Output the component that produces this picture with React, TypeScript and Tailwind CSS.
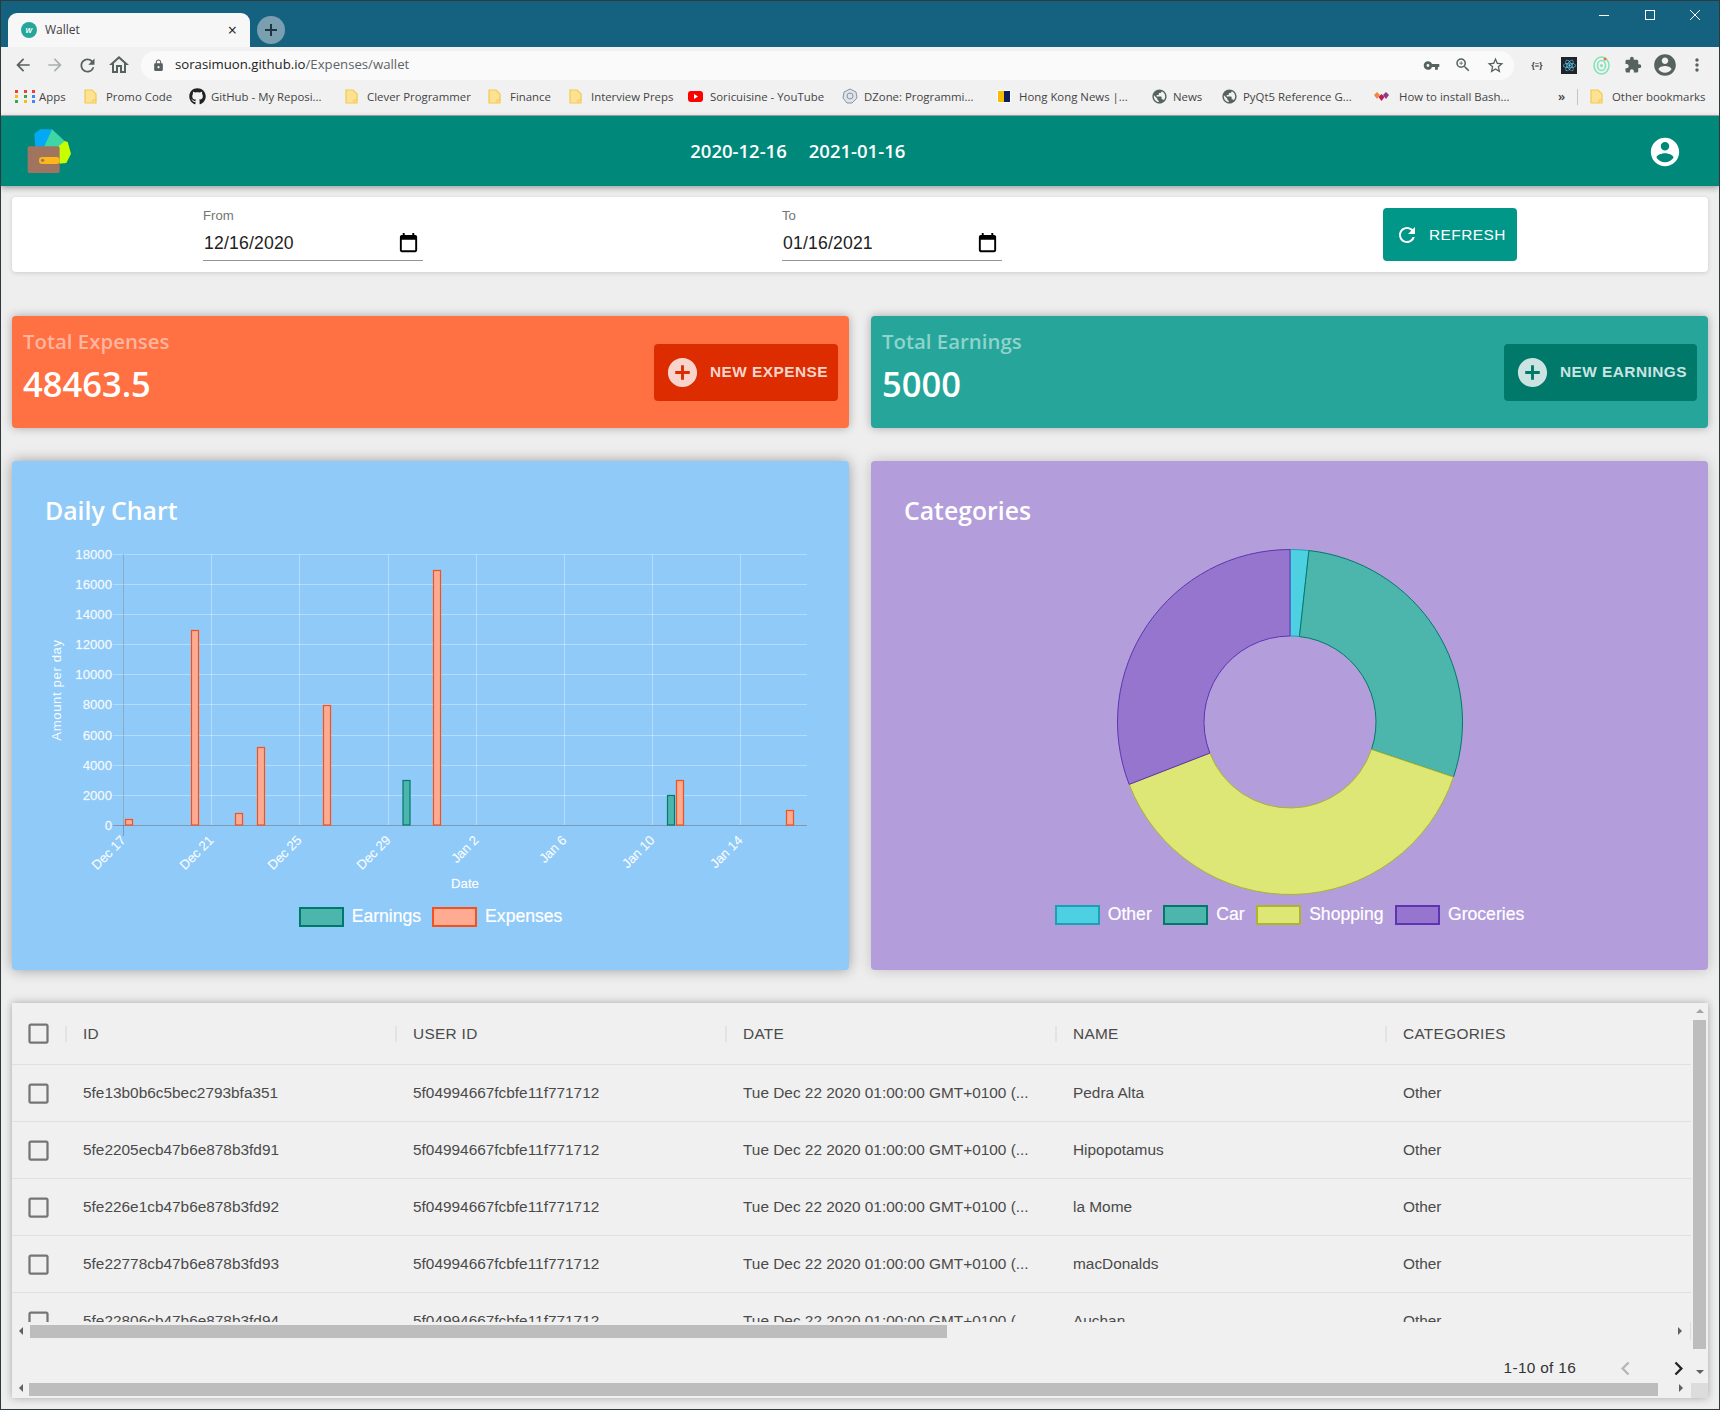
import { FaGithub, FaReact } from "react-icons/fa";
import {
  MdArrowBack,
  MdArrowForward,
  MdCheckBoxOutlineBlank,
  MdChevronLeft,
  MdChevronRight,
  MdExtension,
  MdLock,
  MdMoreVert,
  MdOutlineHome,
  MdPublic,
  MdRefresh,
  MdStarBorder,
  MdVpnKey,
  MdZoomIn,
} from "react-icons/md";

const USER_PATH =
  "M12 2C6.48 2 2 6.48 2 12s4.48 10 10 10 10-4.48 10-10S17.52 2 12 2zm0 3c1.66 0 3 1.34 3 3s-1.34 3-3 3-3-1.34-3-3 1.34-3 3-3zm0 14.2c-2.5 0-4.71-1.28-6-3.22.03-1.99 4-3.08 6-3.08 1.99 0 5.97 1.09 6 3.08-1.29 1.94-3.5 3.22-6 3.22z";

const rows = [
  ["5fe13b0b6c5bec2793bfa351", "Pedra Alta"],
  ["5fe2205ecb47b6e878b3fd91", "Hipopotamus"],
  ["5fe226e1cb47b6e878b3fd92", "la Mome"],
  ["5fe22778cb47b6e878b3fd93", "macDonalds"],
  ["5fe22806cb47b6e878b3fd94", "Auchan"],
];

const yTicks = [18000, 16000, 14000, 12000, 10000, 8000, 6000, 4000, 2000, 0];
const yPos = [554, 584, 614, 644, 674, 704, 735, 765, 795, 825];
const xTicks = [
  ["Dec 17", 123],
  ["Dec 21", 211],
  ["Dec 25", 299],
  ["Dec 29", 388],
  ["Jan 2", 476],
  ["Jan 6", 564],
  ["Jan 10", 652],
  ["Jan 14", 740],
] as const;

// x, top, earnings?
const bars: [number, number, boolean][] = [
  [125.5, 819.5, false],
  [191.5, 630.5, false],
  [235.5, 813.5, false],
  [257.5, 747.5, false],
  [323.5, 705.5, false],
  [403, 780.5, true],
  [433.5, 570.5, false],
  [667.5, 795.5, true],
  [676.5, 780.5, false],
  [786.5, 810.5, false],
];

function slice(a0: number, a1: number) {
  const cx = 1290;
  const cy = 722;
  const R = 172.5;
  const r = 86;
  const p = (rad: number, deg: number) => {
    const t = (deg * Math.PI) / 180;
    return `${(cx + rad * Math.sin(t)).toFixed(2)} ${(cy - rad * Math.cos(t)).toFixed(2)}`;
  };
  const large = a1 - a0 > 180 ? 1 : 0;
  return `M${p(R, a0)} A${R} ${R} 0 ${large} 1 ${p(R, a1)} L${p(r, a1)} A${r} ${r} 0 ${large} 0 ${p(r, a0)} Z`;
}

function Folder() {
  return (
    <svg width="13" height="15" viewBox="0 0 13 15" className="shrink-0">
      <path d="M1 1h7l4 4v9H1z" fill="#fde293" stroke="#f4c94e" strokeWidth="1.2" />
      <path d="M9 14v-3h3" fill="none" stroke="#f4c94e" strokeWidth="1" />
    </svg>
  );
}

function Globe() {
  return <MdPublic size={17} className="shrink-0 text-[#55625f]" />;
}

function AppsIcon() {
  const colors = ["#ea4335", "#ea4335", "#ea4335", "#fbbc04", "#34a853", "#4285f4", "#34a853", "#fbbc04", "#4285f4"];
  return (
    <div className="grid grid-cols-3 gap-[2px] shrink-0">
      {colors.map((c, i) => (
        <div key={i} className="w-[3px] h-[3px]" style={{ background: c }} />
      ))}
    </div>
  );
}

function Bookmark({ width, icon, label }: { width: string; icon: React.ReactNode; label: string }) {
  return (
    <div className={`flex items-center shrink-0 ${width}`}>
      <div className="w-[22px] shrink-0 flex items-center">{icon}</div>
      <span className="whitespace-nowrap">{label}</span>
    </div>
  );
}

function Triangle({ dir }: { dir: "up" | "down" | "left" | "right" }) {
  const pts = {
    up: "1,6 5,2 9,6",
    down: "1,2 9,2 5,6",
    left: "6,1 6,9 2,5",
    right: "2,1 2,9 6,5",
  }[dir];
  return (
    <svg width="10" height="10" viewBox="0 0 10 10" className="shrink-0">
      <polygon points={pts} fill={dir === "up" ? "#a3a3a3" : "#606060"} />
    </svg>
  );
}

function AddIcon({ color }: { color: string }) {
  return (
    <svg width="35" height="35" viewBox="0 0 24 24" fill={color} className="shrink-0 -ml-[3px]">
      <path d="M12 2C6.48 2 2 6.48 2 12s4.48 10 10 10 10-4.48 10-10S17.52 2 12 2zm5 11h-4v4h-2v-4H7v-2h4V7h2v4h4v2z" />
    </svg>
  );
}

function DateField({ label, value }: { label: string; value: string }) {
  return (
    <div className="w-[220px] h-[53px] border-b border-[#949494] flex flex-col font-['Liberation_Sans',sans-serif]">
      <span className="text-[13.2px] leading-[16px] text-[#757575]">{label}</span>
      <div className="flex items-center justify-between mt-[7px] pr-[3px] pl-[1px]">
        <span className="text-[17.6px] leading-[24px] tracking-[0.01em] text-[#222]">{value}</span>
        <svg width="23" height="23" viewBox="0 0 24 24" fill="#000">
          <path d="M19 3h-1V1h-2v2H8V1H6v2H5c-1.11 0-1.99.9-1.99 2L3 19c0 1.1.89 2 2 2h14c1.1 0 2-.9 2-2V5c0-1.1-.9-2-2-2zm0 16H5V8h14v11z" />
        </svg>
      </div>
    </div>
  );
}

function LegendItem({ label, fill, stroke }: { label: string; fill: string; stroke: string }) {
  return (
    <div className="flex items-center gap-[8px]">
      <div className="w-[45px] h-[20px] border-2" style={{ background: fill, borderColor: stroke }} />
      <span className="text-[17.6px] leading-[20px] -mt-[3px] text-white [-webkit-text-stroke:0.2px_white]">{label}</span>
    </div>
  );
}

function DailyChart() {
  return (
    <svg viewBox="12 529 837 370" className="block w-[837px] h-[370px] mt-[1px] font-['Liberation_Sans',sans-serif]">
      {yPos.map((y) => (
        <line key={y} x1="113" x2="807" y1={y + 0.5} y2={y + 0.5} stroke="rgba(255,255,255,0.35)" />
      ))}
      {xTicks.map(([, x]) => (
        <line key={x} x1={x + 0.5} x2={x + 0.5} y1="554" y2="825" stroke="rgba(255,255,255,0.35)" />
      ))}
      <line x1="123.5" x2="123.5" y1="554" y2="836" stroke="rgba(0,0,0,0.22)" />
      <line x1="113" x2="807" y1="825.5" y2="825.5" stroke="rgba(0,0,0,0.3)" />
      {yTicks.map((v, i) => (
        <text
          key={v}
          x="112"
          y={yPos[i] + 5}
          textAnchor="end"
          fontSize="13.2"
          fill="rgba(255,255,255,0.9)"
          stroke="rgba(255,255,255,0.55)"
          strokeWidth="0.35"
        >
          {v}
        </text>
      ))}
      {xTicks.map(([label, x]) => (
        <text
          key={label}
          transform={`translate(${x + 3.5} 841) rotate(-45)`}
          textAnchor="end"
          fontSize="13.2"
          fill="rgba(255,255,255,0.95)"
          stroke="rgba(255,255,255,0.5)"
          strokeWidth="0.3"
        >
          {label}
        </text>
      ))}
      {bars.map(([x, top, earnings]) => (
        <rect
          key={x}
          x={x}
          y={top}
          width="7"
          height={825 - top}
          fill={earnings ? "#4db6ac" : "#ffab91"}
          stroke={earnings ? "#00796b" : "#f4511e"}
          strokeWidth="1.2"
        />
      ))}
      <text
        transform="translate(61 690) rotate(-90)"
        textAnchor="middle"
        fontSize="13.2"
        letterSpacing="0.6"
        fill="rgba(255,255,255,0.95)"
      >
        Amount per day
      </text>
      <text x="465" y="888" textAnchor="middle" fontSize="13.2" fill="#fff" stroke="rgba(255,255,255,0.5)" strokeWidth="0.3">
        Date
      </text>
    </svg>
  );
}

function CategoryChart() {
  return (
    <svg viewBox="871 529 837 370" className="block w-[837px] h-[370px] mt-[1px]">
      <path d={slice(0, 6.3)} fill="#4dd0e1" stroke="#1e9fb5" />
      <path d={slice(6.3, 108.6)} fill="#4db6ac" stroke="#00796b" />
      <path d={slice(108.6, 248.8)} fill="#dce775" stroke="#afb42b" />
      <path d={slice(248.8, 360)} fill="#9575cd" stroke="#5e35b1" />
    </svg>
  );
}

const COLS = "grid grid-cols-[55px_330px_330px_330px_330px_1fr] items-center";

export default function App() {
  return (
    <div className="w-[1720px] h-[1410px] border border-[#2f3a3f] overflow-hidden bg-[#eeeeee] flex flex-col">
      {/* tab strip */}
      <div className="h-[46px] bg-[#156280] flex items-end pl-[7px] shrink-0 relative font-['Open_Sans',sans-serif]">
        <div className="w-[242px] h-[34px] bg-[#f7f7f7] rounded-t-[9px] flex items-center pl-[13px] pr-[13px] text-[12px] text-[#3c4043]">
          <div className="w-[16px] h-[16px] rounded-full bg-[#26a69a] flex items-center justify-center text-white text-[9px] italic font-semibold">
            w
          </div>
          <span className="ml-[8px]">Wallet</span>
          <span className="ml-auto text-[16px] leading-none text-[#222]">×</span>
        </div>
        <div className="w-[28px] h-[28px] ml-[7px] mb-[3px] rounded-full bg-[#7a9fb0] flex items-center justify-center">
          <svg width="14" height="14" viewBox="0 0 14 14" stroke="#1f3640" strokeWidth="2">
            <path d="M7 1v12M1 7h12" />
          </svg>
        </div>
        <div className="ml-auto self-start flex items-center h-[28px] text-white">
          <div className="w-[10px] h-[1px] bg-white mr-[36px]" />
          <div className="w-[10px] h-[10px] border border-white mr-[35px]" />
          <svg width="10" height="10" viewBox="0 0 10 10" stroke="#fff" strokeWidth="1" className="mr-[19px]">
            <path d="M0 0l10 10M10 0L0 10" />
          </svg>
        </div>
      </div>

      {/* toolbar */}
      <div className="h-[33px] pt-[3px] pl-[6px] bg-[#f1f1f1] flex items-center shrink-0 text-[#55625f] font-['Open_Sans',sans-serif]">
        <div className="w-[32px] flex justify-center">
          <MdArrowBack size={20} />
        </div>
        <div className="w-[32px] flex justify-center">
          <MdArrowForward size={20} className="text-[#a9b0ae]" />
        </div>
        <div className="w-[32px] flex justify-center">
          <MdRefresh size={21} />
        </div>
        <div className="w-[32px] flex justify-center">
          <MdOutlineHome size={24} />
        </div>
        <div className="ml-[6px] w-[1373px] h-[29px] bg-[#fafafa] rounded-full flex items-center pl-[11px] pr-[9px] text-[13.2px]">
          <MdLock size={13} />
          <span className="ml-[10px] text-[#222]">sorasimuon.github.io</span>
          <span className="text-[#5f6368]">/Expenses/wallet</span>
          <div className="ml-auto flex items-center gap-[14px]">
            <MdVpnKey size={17} />
            <MdZoomIn size={18} />
            <MdStarBorder size={19} />
          </div>
        </div>
        <div className="flex items-center ml-[7px]">
          <div className="w-[32px] flex justify-center text-[8px] font-bold text-[#333]">{"{≡}"}</div>
          <div className="w-[32px] flex justify-center">
            <div className="w-[16px] h-[17px] bg-[#20232a] flex items-center justify-center">
              <FaReact size={13} className="text-[#61dafb]" />
            </div>
          </div>
          <div className="w-[32px] flex justify-center">
            <svg width="17" height="19" viewBox="0 0 17 19" fill="none">
              <ellipse cx="8.5" cy="9.5" rx="7.5" ry="8.5" stroke="#7fe3b8" strokeWidth="1.5" />
              <ellipse cx="8.5" cy="9.5" rx="4" ry="5" stroke="#7fe3b8" strokeWidth="1.5" />
              <circle cx="8.5" cy="9.5" r="1.5" fill="#7fe3b8" />
              <circle cx="12" cy="3" r="1.5" fill="#f0743a" />
            </svg>
          </div>
          <div className="w-[32px] flex justify-center">
            <MdExtension size={18} />
          </div>
          <div className="w-[32px] flex justify-center">
            <svg width="26" height="26" viewBox="0 0 24 24" fill="currentColor">
              <path d={USER_PATH} />
            </svg>
          </div>
          <div className="w-[32px] flex justify-center">
            <MdMoreVert size={20} />
          </div>
        </div>
      </div>

      {/* bookmarks */}
      <div className="h-[36px] pb-[2px] bg-[#f1f1f1] border-b border-[#a8a8a8] flex items-center pl-[14px] text-[11.4px] text-[#444] shrink-0 font-['Open_Sans',sans-serif]">
        <div className="flex items-center shrink-0 w-[69px]">
          <div className="w-[24px] shrink-0">
            <AppsIcon />
          </div>
          Apps
        </div>
        <Bookmark width="w-[105px]" icon={<Folder />} label="Promo Code" />
        <Bookmark width="w-[156px]" icon={<FaGithub size={17} className="text-[#222]" />} label="GitHub - My Reposi..." />
        <Bookmark width="w-[143px]" icon={<Folder />} label="Clever Programmer" />
        <Bookmark width="w-[81px]" icon={<Folder />} label="Finance" />
        <Bookmark width="w-[119px]" icon={<Folder />} label="Interview Preps" />
        <Bookmark
          width="w-[154px]"
          icon={
            <svg width="15" height="11" viewBox="0 0 15 11">
              <rect width="15" height="11" rx="3" fill="#f00" />
              <polygon points="6,3 6,8 10,5.5" fill="#fff" />
            </svg>
          }
          label="Soricuisine - YouTube"
        />
        <Bookmark
          width="w-[155px]"
          icon={
            <svg width="16" height="16" viewBox="0 0 16 16" fill="#dfe3ea" stroke="#8a93a3">
              <polygon points="8,1 14,4 15,10 10,15 5,15 1,10 2,4" />
              <circle cx="8" cy="8" r="3" fill="none" />
            </svg>
          }
          label="DZone: Programmi..."
        />
        <Bookmark
          width="w-[154px]"
          icon={
            <div className="flex w-[14px] h-[13px] border border-white">
              <div className="w-1/2 bg-[#f7bd00]" />
              <div className="w-1/2 bg-[#0a1f5c]" />
            </div>
          }
          label="Hong Kong News |..."
        />
        <Bookmark width="w-[70px]" icon={<Globe />} label="News" />
        <Bookmark width="w-[153px]" icon={<Globe />} label="PyQt5 Reference G..." />
        <div className="flex items-center shrink-0 w-[184px]">
          <svg width="15" height="10" viewBox="0 0 15 10" className="shrink-0 mr-[10px]">
            <polygon points="3,1 6,4 3,8 0,4" fill="#ef8a3a" />
            <polygon points="7.5,3 10.5,6 7.5,10 4.5,6" fill="#c2185b" />
            <polygon points="12,1 15,4 12,8 9,4" fill="#8e3a7f" />
          </svg>
          <span className="whitespace-nowrap">How to install Bash...</span>
        </div>
        <span className="w-[19px] text-[13px] font-semibold leading-none">»</span>
        <div className="w-px h-[16px] bg-[#c4c4c4] mr-[12px]" />
        <Bookmark width="w-[120px]" icon={<Folder />} label="Other bookmarks" />
      </div>

      {/* app bar */}
      <header className="h-[70px] bg-[#00897b] flex items-start shrink-0 relative z-10 shadow-[0_2px_6px_rgba(0,0,0,0.35)] font-['Open_Sans',sans-serif]">
        <svg width="46.67" height="46.67" viewBox="50 50 140 140" className="ml-[25.6px] mt-[10.6px] shrink-0">
          <polygon points="72,70 90,57 125,57 104,112 75,112" fill="#03a9f4" />
          <polygon points="125,57 163,92 150,112 100,112" fill="#3ed6a5" />
          <polygon points="163,92 172,95 182,130 168,158 145,160 145,108" fill="#c6ff00" />
          <rect x="52" y="108" width="96" height="80" rx="5" fill="#a1745f" />
          <rect x="86" y="140" width="62" height="21" rx="10" fill="#fbb81b" />
          <circle cx="97" cy="150" r="5" fill="#a1745f" />
        </svg>
        <div className="ml-[617px] h-full flex items-center gap-[22px] text-[18.5px] font-semibold text-white">
          <span>2020-12-16</span>
          <span>2021-01-16</span>
        </div>
        <svg width="34" height="34" viewBox="0 0 24 24" fill="#fff" className="ml-auto mr-[37px] mt-[19px]">
          <path d={USER_PATH} />
        </svg>
      </header>

      <main className="flex-1 px-[11px] pt-[11px] flex flex-col">
        {/* date filter */}
        <div className="h-[75px] bg-white rounded-[4px] shadow-[0_1px_4px_rgba(0,0,0,0.15)] flex items-start pl-[191px] pt-[11px] shrink-0">
          <DateField label="From" value="12/16/2020" />
          <div className="ml-[359px]">
            <DateField label="To" value="01/16/2021" />
          </div>
          <div className="ml-[381px] w-[134px] h-[53px] bg-[#009688] rounded-[4px] flex items-center pl-[12px] gap-[10px] text-white text-[15.4px] tracking-[0.03em] font-['Liberation_Sans',sans-serif]">
            <svg width="24" height="24" viewBox="0 0 24 24" fill="#fff">
              <path d="M17.65 6.35C16.2 4.9 14.21 4 12 4c-4.42 0-7.99 3.58-7.99 8s3.57 8 7.99 8c3.73 0 6.84-2.55 7.73-6h-2.08c-.82 2.33-3.04 4-5.65 4-3.31 0-6-2.69-6-6s2.69-6 6-6c1.66 0 3.14.69 4.22 1.78L13 11h7V4l-2.35 2.35z" />
            </svg>
            REFRESH
          </div>
        </div>

        {/* totals */}
        <div className="grid grid-cols-2 gap-[22px] mt-[44px] shrink-0">
          <div className="h-[112px] bg-[#ff7043] rounded-[4px] shadow-[0_0_10px_rgba(0,0,0,0.3)] flex items-center justify-between pl-[11px] pr-[11px] font-['Open_Sans',sans-serif]">
            <div className="-mt-[11px]">
              <div className="text-[20.4px] leading-[30px] font-semibold text-[#ffb59e]">Total Expenses</div>
              <div className="text-[34.5px] leading-[48px] mt-[4px] font-semibold text-white">48463.5</div>
            </div>
            <div className="w-[184px] h-[57px] bg-[#dd2c00] rounded-[4px] flex items-center pl-[14px] gap-[10px] text-[15.4px] font-bold tracking-[0.03em] text-[#f8d5cc] font-['Liberation_Sans',sans-serif]">
              <AddIcon color="rgba(255,255,255,0.8)" />
              NEW EXPENSE
            </div>
          </div>
          <div className="h-[112px] bg-[#26a69a] rounded-[4px] shadow-[0_0_10px_rgba(0,0,0,0.3)] flex items-center justify-between pl-[11px] pr-[11px] font-['Open_Sans',sans-serif]">
            <div className="-mt-[11px]">
              <div className="text-[20.4px] leading-[30px] font-semibold text-[#8fd3cc]">Total Earnings</div>
              <div className="text-[34.5px] leading-[48px] mt-[4px] font-semibold text-white">5000</div>
            </div>
            <div className="w-[193px] h-[57px] bg-[#00796b] rounded-[4px] flex items-center pl-[14px] gap-[10px] text-[15.4px] font-bold tracking-[0.03em] text-[#cce4e1] font-['Liberation_Sans',sans-serif]">
              <AddIcon color="rgba(255,255,255,0.8)" />
              NEW EARNINGS
            </div>
          </div>
        </div>

        {/* charts */}
        <div className="grid grid-cols-2 gap-[22px] mt-[33px] shrink-0 font-['Liberation_Sans',sans-serif]">
          <div className="h-[509px] bg-[#90caf9] rounded-[4px] shadow-[0_0_14px_rgba(0,0,0,0.35)] pt-[31px]">
            <h2 className="pl-[33px] text-[24.8px] leading-[36px] font-semibold text-white font-['Open_Sans',sans-serif]">Daily Chart</h2>
            <DailyChart />
            <div className="flex justify-center gap-[11px] mt-[8px]">
              <LegendItem label="Earnings" fill="#4db6ac" stroke="#00796b" />
              <LegendItem label="Expenses" fill="#ffab91" stroke="#f4511e" />
            </div>
          </div>
          <div className="h-[509px] bg-[#b39ddb] rounded-[4px] shadow-[0_0_14px_rgba(0,0,0,0.2)] pt-[31px]">
            <h2 className="pl-[33px] text-[24.8px] leading-[36px] font-semibold text-white font-['Open_Sans',sans-serif]">Categories</h2>
            <CategoryChart />
            <div className="flex justify-center gap-[11.5px] mt-[6px]">
              <LegendItem label="Other" fill="#4dd0e1" stroke="#1e9fb5" />
              <LegendItem label="Car" fill="#4db6ac" stroke="#00796b" />
              <LegendItem label="Shopping" fill="#dce775" stroke="#afb42b" />
              <LegendItem label="Groceries" fill="#9575cd" stroke="#5e35b1" />
            </div>
          </div>
        </div>

        {/* table */}
        <div className="h-[395px] mt-[33px] bg-[#f0f0f0] shadow-[0_0_8px_rgba(0,0,0,0.3)] flex flex-col shrink-0 overflow-hidden font-['Liberation_Sans',sans-serif] text-[15.4px] text-[#4a4a4a]">
          <div className="flex h-[380px]">
            <div className="flex-1 min-w-0 flex flex-col">
              <div className="h-[319px] overflow-hidden">
                <div className={`h-[62px] border-b border-[#e0e0e0] ${COLS}`}>
                  <div className="flex justify-center -ml-[2px] text-[#757575]">
                    <MdCheckBoxOutlineBlank size={27} />
                  </div>
                  {["ID", "USER ID", "DATE", "NAME", "CATEGORIES"].map((h) => (
                    <div key={h} className="flex items-center h-[16px] -ml-[2px] border-l-2 border-[#e3e3e3] pl-[16px] tracking-[0.02em]">
                      {h}
                    </div>
                  ))}
                </div>
                {rows.map(([id, name]) => (
                  <div key={id} className={`h-[57px] border-b border-[#e0e0e0] ${COLS}`}>
                    <div className="flex justify-center -ml-[2px] text-[#757575]">
                      <MdCheckBoxOutlineBlank size={27} />
                    </div>
                    <div className="pl-[16px]">{id}</div>
                    <div className="pl-[16px]">5f04994667fcbfe11f771712</div>
                    <div className="pl-[16px] whitespace-nowrap">Tue Dec 22 2020 01:00:00 GMT+0100 (...</div>
                    <div className="pl-[16px]">{name}</div>
                    <div className="pl-[16px]">Other</div>
                  </div>
                ))}
              </div>
              <div className="h-[18px] flex items-center pl-[5px] pr-[4px] border-r border-[#dedede]">
                <div className="w-[13px]">
                  <Triangle dir="left" />
                </div>
                <div className="w-[917px] h-[13px] bg-[#bdbdbd]" />
                <div className="ml-auto">
                  <Triangle dir="right" />
                </div>
              </div>
              <div className="h-[43px] pt-[13px] flex items-center justify-end text-[#333] tracking-[0.02em]">
                <span>1-10 of 16</span>
                <MdChevronLeft size={27} className="ml-[36px] text-[#b5b5b5]" />
                <MdChevronRight size={27} className="ml-[26px] -mr-[1px] text-[#222]" />
              </div>
            </div>
            <div className="w-[17px] flex flex-col items-center justify-between pb-[2px]">
              <div className="flex flex-col items-center">
                <div className="h-[17px] flex items-center justify-center">
                  <Triangle dir="up" />
                </div>
                <div className="w-[13px] h-[329px] bg-[#bdbdbd]" />
              </div>
              <div className="h-[17px] flex items-center justify-center">
                <Triangle dir="down" />
              </div>
            </div>
          </div>
          <div className="h-[15px] flex">
            <div className="flex-1 flex items-start pl-[5px] pr-[4px]">
              <div className="w-[12px]">
                <Triangle dir="left" />
              </div>
              <div className="w-[1629px] h-[13px] bg-[#bdbdbd]" />
              <div className="ml-auto">
                <Triangle dir="right" />
              </div>
            </div>
            <div className="w-[17px] bg-[#dcdcdc]" />
          </div>
        </div>
      </main>
    </div>
  );
}
